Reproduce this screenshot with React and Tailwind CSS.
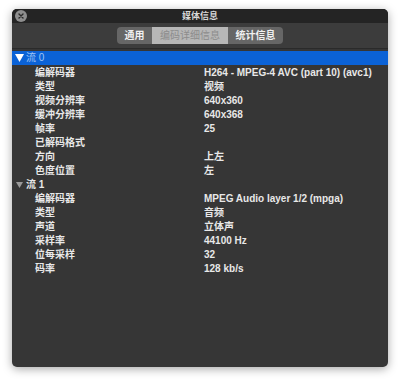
const stream0 = [
  ['编解码器', 'H264 - MPEG-4 AVC (part 10) (avc1)'],
  ['类型', '视频'],
  ['视频分辨率', '640x360'],
  ['缓冲分辨率', '640x368'],
  ['帧率', '25'],
  ['已解码格式', ''],
  ['方向', '上左'],
  ['色度位置', '左'],
];

const stream1 = [
  ['编解码器', 'MPEG Audio layer 1/2 (mpga)'],
  ['类型', '音频'],
  ['声道', '立体声'],
  ['采样率', '44100 Hz'],
  ['位每采样', '32'],
  ['码率', '128 kb/s'],
];

function Row({ label, value }) {
  return (
    <div className="flex h-[14px] items-center leading-[14px] whitespace-nowrap font-bold pt-[1px]">
      <div className="w-[192px] pl-[23px]">{label}</div>
      <div>{value}</div>
    </div>
  );
}

export default function App() {
  return (
    <div
      className="w-[400px] h-[383px] bg-white pt-[9px] px-[12px]"
      style={{ fontFamily: '"Liberation Sans", "Noto Sans CJK SC", sans-serif' }}
    >
      <div className="w-[376px] h-[358px] rounded-[5px] overflow-hidden bg-[#363636] shadow-[0_2px_10px_rgba(0,0,0,0.35)] flex flex-col text-[10px] text-[#e8e8e8] leading-[14px]">
        <div className="h-[14px] bg-[#242424] relative flex items-center justify-center">
          <div className="absolute left-[3px] top-[1px] w-[12px] h-[12px] rounded-full bg-[#8e8e8e] flex items-center justify-center">
            <svg width="6" height="6" viewBox="0 0 6 6">
              <path d="M1 1L5 5M5 1L1 5" stroke="#2a2a2a" strokeWidth="1.4" strokeLinecap="round" />
            </svg>
          </div>
          <span className="text-[9px] font-bold text-[#d8d8d8]">媒体信息</span>
        </div>
        <div className="h-[26px] bg-[#3c3c3c] border-b border-[#2a2a2a] flex items-center justify-center">
          <div className="flex h-[17px] rounded-[4px] overflow-hidden bg-[#666] text-[10px] font-bold">
            <div className="w-[35px] flex items-center justify-center text-[#f0f0f0]">通用</div>
            <div className="w-[76px] flex items-center justify-center bg-[#b7b7b7] text-[#8c8c8c] font-normal">编码详细信息</div>
            <div className="w-[55px] flex items-center justify-center text-[#f0f0f0]">统计信息</div>
          </div>
        </div>
        <div className="pt-[2px]">
          <div className="h-[14px] bg-[#0b62d6] flex items-center pl-[3px] text-[#9fc4f5]">
            <svg width="9" height="8" viewBox="0 0 9 8" className="mr-[2px]">
              <path d="M0 0H9L4.5 8Z" fill="#ffffff" />
            </svg>
            <span>流 0</span>
          </div>
          {stream0.map(([l, v]) => (
            <Row key={'a' + l} label={l} value={v} />
          ))}
          <div className="h-[14px] flex items-center pl-[3px] font-bold pt-[1px]">
            <svg width="7" height="6" viewBox="0 0 7 6" className="mr-[3px] ml-[1px]">
              <path d="M0 0H7L3.5 6Z" fill="#9a9a9a" />
            </svg>
            <span>流 1</span>
          </div>
          {stream1.map(([l, v]) => (
            <Row key={'b' + l} label={l} value={v} />
          ))}
        </div>
      </div>
    </div>
  );
}
